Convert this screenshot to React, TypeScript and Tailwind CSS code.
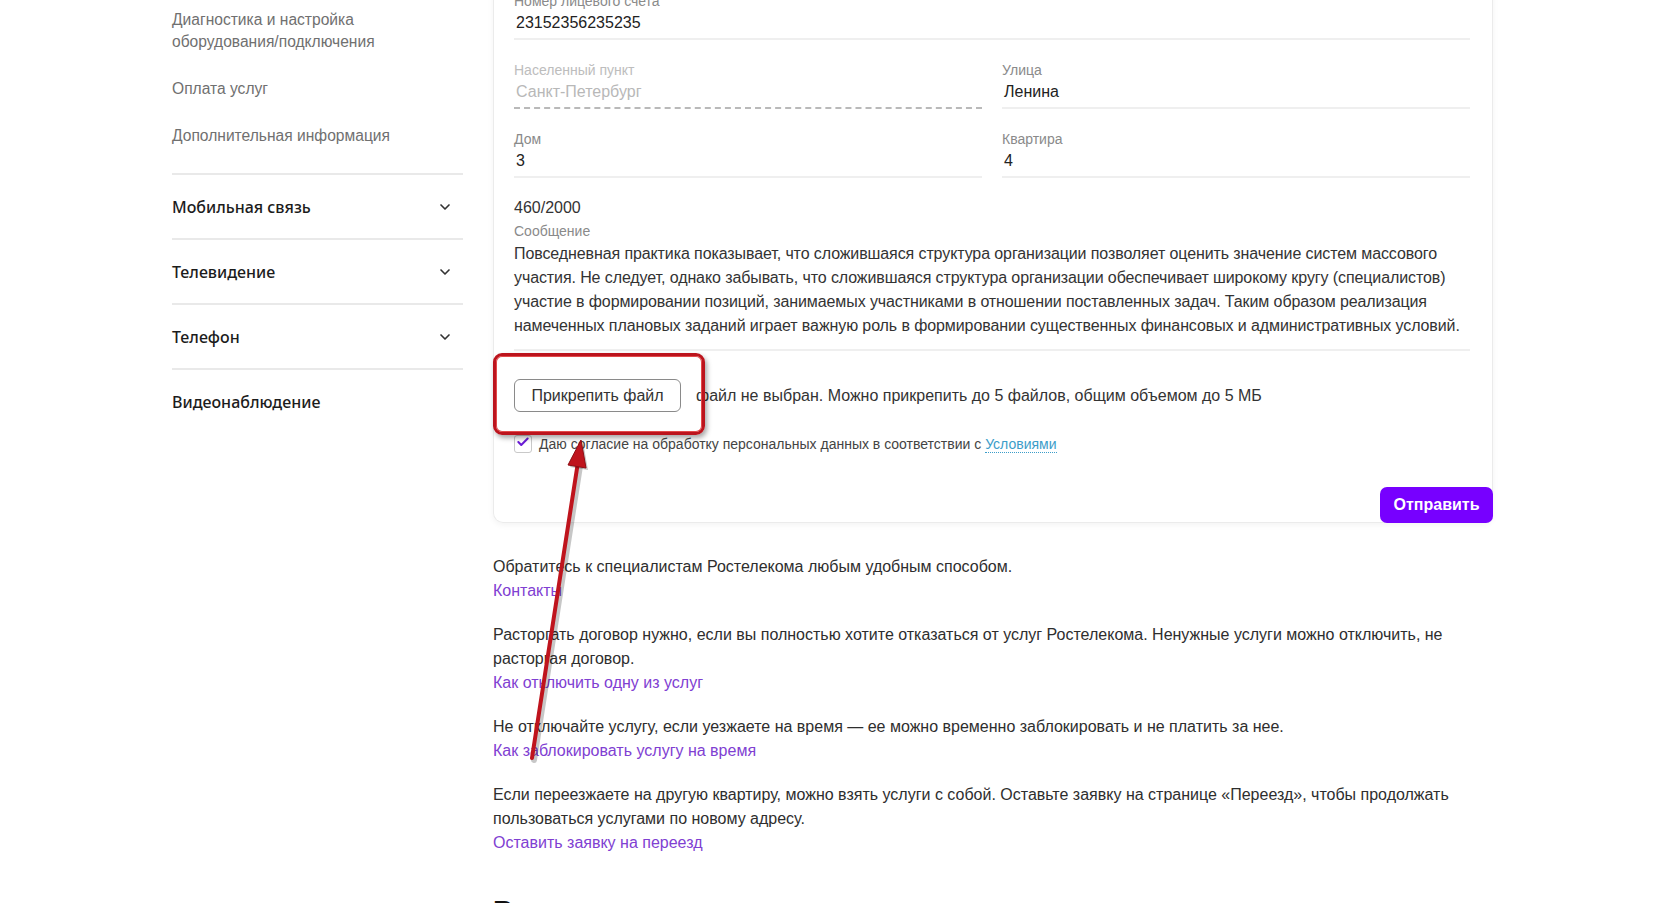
import React from 'react';
import { ChevronDown, Check } from 'lucide-react';

const subItems = ['Диагностика и настройка оборудования/подключения', 'Оплата услуг', 'Дополнительная информация'];
const sections = ['Мобильная связь', 'Телевидение', 'Телефон'];

const messageLines = [
  'Повседневная практика показывает, что сложившаяся структура организации позволяет оценить значение систем массового',
  'участия. Не следует, однако забывать, что сложившаяся структура организации обеспечивает широкому кругу (специалистов)',
  'участие в формировании позиций, занимаемых участниками в отношении поставленных задач. Таким образом реализация',
  'намеченных плановых заданий играет важную роль в формировании существенных финансовых и административных условий.',
];

const Field: React.FC<{ label: string; value: string; disabled?: boolean }> = ({ label, value, disabled }) => (
  <div className={disabled ? 'pb-[3px] border-b-2 border-dashed border-[#b9b9b9]' : 'pb-[3px] border-b-2 border-[#efefef]'}>
    <div className={`text-[14px] leading-[20px] ${disabled ? 'text-[#bdbdbd]' : 'text-[#8a8a8a]'}`}>{label}</div>
    <div className={`pl-[2px] text-[16px] leading-[24px] ${disabled ? 'text-[#b8b8b8]' : 'text-[#222]'}`}>{value}</div>
  </div>
);

export default function App() {
  return (
    <div className="relative h-[903px] overflow-hidden bg-white font-['Liberation_Sans',Arial,sans-serif]">
      <div className="flex gap-[30px] pl-[172px]">
        <aside className="w-[291px] shrink-0">
          <div className="flex flex-col gap-[25px] pt-[9px] pb-[26px] border-b-2 border-[#e9e9e9]">
            {subItems.map((item) => (
              <div key={item} className="text-[15.6px] leading-[22px] text-[#707070]">{item}</div>
            ))}
          </div>
          {sections.map((s) => (
            <div key={s} className="h-[65px] flex items-center justify-between pr-[10px] border-b-2 border-[#e9e9e9]">
              <span className="font-['Noto_Sans',sans-serif] text-[16px] font-medium text-[#1c1c1c]">{s}</span>
              <ChevronDown className="w-4 h-4 text-[#333]" strokeWidth={2.5} />
            </div>
          ))}
          <div className="h-[63px] flex items-center">
            <span className="font-['Noto_Sans',sans-serif] text-[16px] font-medium text-[#1c1c1c]">Видеонаблюдение</span>
          </div>
        </aside>

        <main className="w-[1000px] shrink-0 -mt-[9px]">
          <div className="border-x border-b border-[#ebebeb] rounded-b-[10px] shadow-[0_2px_6px_rgba(0,0,0,0.05)]">
            <div className="pl-[20px] pr-[22px]">
              <div className="flex flex-col gap-[20px]">
                <Field label="Номер лицевого счета" value="23152356235235" />
                <div className="grid grid-cols-2 gap-x-[20px]">
                  <Field label="Населенный пункт" value="Санкт-Петербург" disabled />
                  <Field label="Улица" value="Ленина" />
                </div>
                <div className="grid grid-cols-2 gap-x-[20px]">
                  <Field label="Дом" value="3" />
                  <Field label="Квартира" value="4" />
                </div>
              </div>

              <div className="mt-[18px] pb-[11px] border-b-2 border-[#efefef]">
                <div className="text-[16px] leading-[24px] text-[#333]">460/2000</div>
                <div className="text-[14px] leading-[22px] text-[#8a8a8a]">Сообщение</div>
                <div className="text-[16px] leading-[24px] text-[#333]">
                  {messageLines.map((line) => (
                    <div key={line} className="whitespace-nowrap tracking-[-0.1px]">{line}</div>
                  ))}
                </div>
              </div>

              <div className="mt-[28px] flex items-center">
                <button className="h-[33px] w-[167px] border border-[#8a8a8a] rounded-[6px] text-[16px] text-[#333]">
                  Прикрепить файл
                </button>
                <span className="ml-[15px] text-[16px] text-[#333]">файл не выбран. Можно прикрепить до 5 файлов, общим объемом до 5 МБ</span>
              </div>

              <div className="mt-[22px] h-[20px] flex items-center">
                <span className="w-[18px] h-[18px] border border-[#c9c9c9] rounded-[3px] flex items-center justify-center">
                  <Check className="w-[14px] h-[14px] text-[#6a1bd6] -mt-[4px]" strokeWidth={3.5} />
                </span>
                <span className="ml-[7px] text-[14px] text-[#444]">
                  Даю согласие на обработку персональных данных в соответствии с{' '}
                  <a className="text-[#3c9dc9] border-b border-dotted border-[#3c9dc9]">Условиями</a>
                </span>
              </div>
            </div>

            <div className="mt-[33px] flex justify-end -mr-px -mb-px">
              <button className="h-[36px] w-[113px] rounded-[7px] bg-[#7700ff] text-white text-[16px] font-bold">
                Отправить
              </button>
            </div>
          </div>

          <div className="mt-[32px] flex flex-col gap-[20px] text-[16px] leading-[24px] text-[#2e2e2e]">
            <div>
              <p>Обратитесь к специалистам Ростелекома любым удобным способом.</p>
              <a className="text-[#8040d2]">Контакты</a>
            </div>
            <div>
              <p>Расторгать договор нужно, если вы полностью хотите отказаться от услуг Ростелекома. Ненужные услуги можно отключить, не расторгая договор.</p>
              <a className="text-[#8040d2]">Как отключить одну из услуг</a>
            </div>
            <div>
              <p>Не отключайте услугу, если уезжаете на время — ее можно временно заблокировать и не платить за нее.</p>
              <a className="text-[#8040d2]">Как заблокировать услугу на время</a>
            </div>
            <div>
              <p>Если переезжаете на другую квартиру, можно взять услуги с собой. Оставьте заявку на странице «Переезд», чтобы продолжать пользоваться услугами по новому адресу.</p>
              <a className="text-[#8040d2]">Оставить заявку на переезд</a>
            </div>
          </div>

          <h2 className="mt-[38px] text-[28px] leading-[36px] font-bold text-[#111]">Вопросы и ответы</h2>
        </main>
      </div>

      {/* annotation overlay */}
      <div className="absolute left-[493px] top-[353px] w-[212px] h-[82px] border-[3px] border-[#bc141d] rounded-[9px] shadow-[inset_0_0_0_1px_#e24a4a,2px_3px_5px_rgba(0,0,0,0.35)]" />
      <svg className="absolute inset-0 pointer-events-none" width="1662" height="903">
        <line x1="534" y1="760" x2="580" y2="466" stroke="rgba(0,0,0,0.22)" strokeWidth="6" strokeLinecap="round" />
        <line x1="532" y1="758" x2="578" y2="462" stroke="#bf141d" strokeWidth="4" strokeLinecap="round" />
        <polygon points="583,442 588,470 570,467" fill="rgba(0,0,0,0.22)" />
        <polygon points="581,440 586,468 568,465" fill="#bf141d" stroke="#8f0d14" strokeWidth="1" strokeLinejoin="round" />
      </svg>
    </div>
  );
}
